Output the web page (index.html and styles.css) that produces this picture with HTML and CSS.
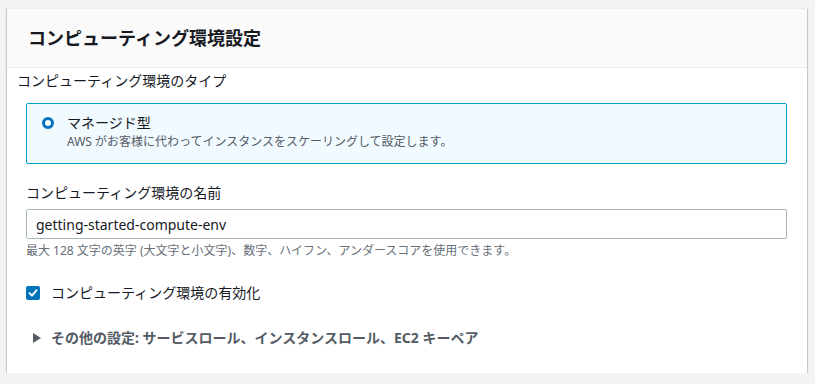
FILE: index.html
```html
<!DOCTYPE html>
<html lang="ja">
<head>
  <meta charset="UTF-8" />
  <meta name="viewport" content="width=device-width, initial-scale=1.0"/>
  <title>コンピューティング環境設定</title>
  <link rel="stylesheet" href="styles.css">
</head>
<body>
  <div class="card">
    <div class="card-header">
      <h2>コンピューティング環境設定</h2>
    </div>

    <div class="card-body">
      <div class="type-label">コンピューティング環境のタイプ</div>

      <div class="fields">
        <label class="tile">
          <span class="radio"></span>
          <span class="tile-text">
            <span class="tile-title">マネージド型</span>
            <span class="tile-desc">AWS がお客様に代わってインスタンスをスケーリングして設定します。</span>
          </span>
        </label>

        <div class="field">
          <div class="field-label">コンピューティング環境の名前</div>
          <input class="text-input" type="text" value="getting-started-compute-env">
          <div class="hint">最大 128 文字の英字 (大文字と小文字)、数字、ハイフン、アンダースコアを使用できます。</div>
        </div>

        <label class="check-row">
          <span class="checkbox">
            <svg width="10" height="10" viewBox="0 0 10 10">
              <polyline points="1.5,5.2 4,7.7 8.6,2.2" fill="none" stroke="#fff" stroke-width="1.9" stroke-linecap="round" stroke-linejoin="round"/>
            </svg>
          </span>
          <span>コンピューティング環境の有効化</span>
        </label>

        <div class="expander">
          <span class="caret"></span>
          <span>その他の設定: サービスロール、インスタンスロール、EC2 キーペア</span>
        </div>
      </div>
    </div>
  </div>
</body>
</html>
```

FILE: styles.css
```css
body {
  margin: 0;
  padding: 8px 8px 0 7px;
  background: #f2f3f3;
  font-family: 'Noto Sans', 'Noto Sans CJK JP', sans-serif;
  font-size: 14px;
  line-height: 20px;
  color: #16191f;
}

.card {
  width: 800px;
  box-sizing: border-box;
  background: #fff;
  border-top: 1px solid #eaeded;
  box-shadow: 0 1px 1px 0 rgba(0, 28, 36, 0.3),
              1px 1px 1px 0 rgba(0, 28, 36, 0.15),
              -1px 1px 1px 0 rgba(0, 28, 36, 0.15);
}

.card-header {
  background: #fafafa;
  border-bottom: 1px solid #eaeded;
  height: 58px;
  display: flex;
  align-items: center;
  padding-left: 21px;
}

.card-header h2 {
  margin: 0;
  font-size: 18px;
  font-weight: 700;
  line-height: 22px;
  color: #16191f;
}

.card-body {
  padding: 3px 20px 25px 10px;
}

.type-label {
  line-height: 20px;
}

.fields {
  padding-left: 9px;
  padding-top: 12px;
}

.tile {
  display: flex;
  align-items: flex-start;
  background: #f1faff;
  border: 1px solid #00a1c9;
  border-radius: 2px;
  padding: 9px 14px 12px 15px;
}

.radio {
  width: 12px;
  height: 12px;
  box-sizing: border-box;
  border: 3.5px solid #0073bb;
  border-radius: 50%;
  background: #fff;
  margin-top: 4px;
  margin-right: 13px;
  flex-shrink: 0;
}

.tile-text {
  display: flex;
  flex-direction: column;
}

.tile-title {
  line-height: 20px;
}

.tile-desc {
  font-size: 12px;
  line-height: 18px;
  color: #545b64;
}

.field {
  margin-top: 19px;
}

.field-label {
  line-height: 20px;
  margin-bottom: 6px;
}

.text-input {
  display: block;
  width: 100%;
  height: 30px;
  box-sizing: border-box;
  border: 1px solid #aab7b8;
  border-radius: 2px;
  padding: 0 9px;
  font-family: 'Noto Sans', 'Noto Sans CJK JP', sans-serif;
  font-size: 14px;
  color: #16191f;
  background: #fff;
  outline: none;
}

.hint {
  font-size: 12px;
  line-height: 16px;
  color: #687078;
  margin-top: 4px;
}

.check-row {
  display: flex;
  align-items: center;
  margin-top: 24px;
  line-height: 20px;
}

.checkbox {
  width: 14px;
  height: 14px;
  border-radius: 2px;
  background: #0073bb;
  display: flex;
  align-items: center;
  justify-content: center;
  margin-right: 11px;
}

.expander {
  display: flex;
  align-items: center;
  margin-top: 25px;
  font-weight: 700;
  color: #545b64;
  line-height: 20px;
}

.caret {
  width: 0;
  height: 0;
  border-top: 5px solid transparent;
  border-bottom: 5px solid transparent;
  border-left: 8px solid #545b64;
  margin-left: 7px;
  margin-right: 10px;
}
```
